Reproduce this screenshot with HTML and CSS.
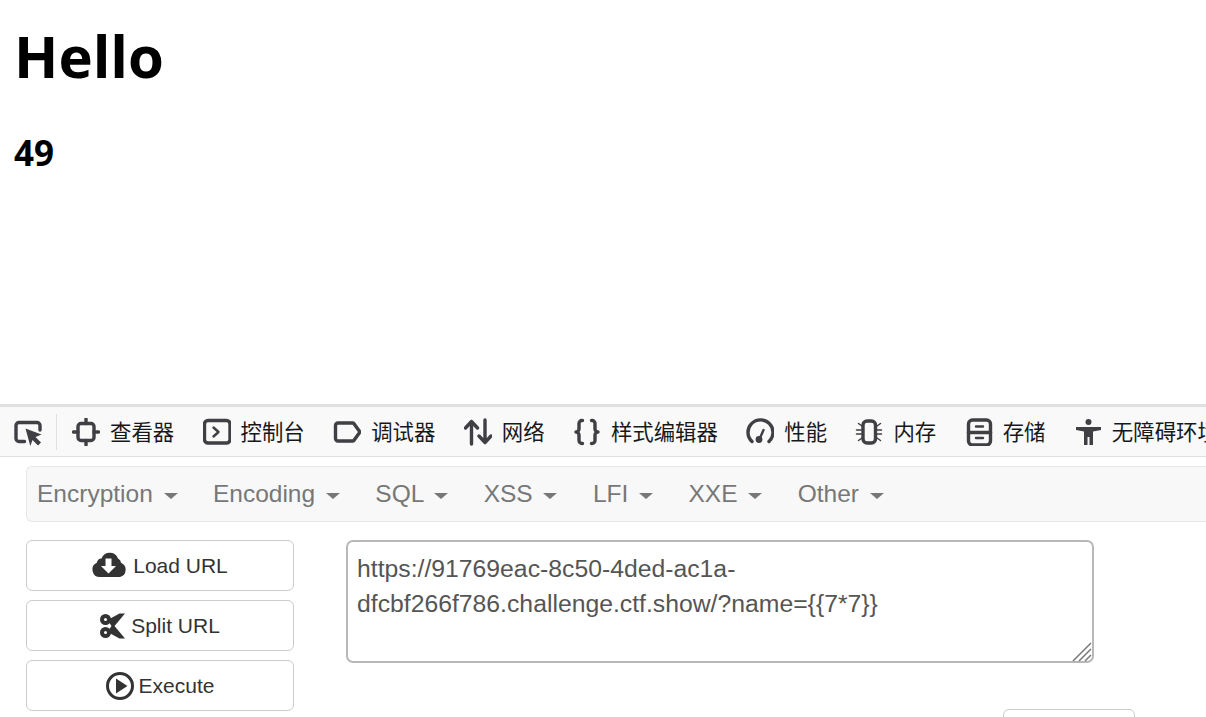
FILE: index.html
```html
<!DOCTYPE html>
<html lang="en">
<head>
    <meta charset="UTF-8">
    <meta name="viewport" content="width=device-width, initial-scale=1.0">
    <title>Hello</title>
    <link rel="stylesheet" href="styles.css">
</head>
<body>
    <div class="page">
        <h1>Hello</h1>
        <h3>49</h3>
    </div>

    <div class="toolbox">
        <button class="picker" aria-label="pick">
            <svg viewBox="0 0 28 28" width="28" height="28"><path class="line" d="M10.500 23.500H5a3 3 0 0 1-3-3V7.500a3 3 0 0 1 3-3h18a3 3 0 0 1 3 3V12"/><path class="fill" d="M11.500 10.500l16 6-6 2.500 5.500 5.500-3 3-5.500-5.500-2.200 6z"/></svg>
        </button>
        <span class="sep"></span>
        <div class="tab">
            <svg viewBox="0 0 28 28" width="28" height="28"><rect class="line" x="6" y="5.500" width="16" height="17" rx="3"/><path class="line" d="M14 1v4.500M14 22.500V27M1.500 14H6M22 14h4.500"/></svg>
            <span>查看器</span>
        </div>
        <div class="tab">
            <svg viewBox="0 0 28 28" width="28" height="28"><rect class="line" x="1.500" y="2.500" width="25.500" height="22.500" rx="3.500"/><path class="line thin" d="M10.500 9.500l5 4.500-5 4.500"/></svg>
            <span>控制台</span>
        </div>
        <div class="tab">
            <svg viewBox="0 0 28 28" width="28" height="28"><path class="line" d="M5 5h14.500a2 2 0 0 1 1.500.7l6 8.300-6 8.300a2 2 0 0 1-1.500.7H5a2.500 2.500 0 0 1-2.500-2.500v-13A2.500 2.500 0 0 1 5 5z"/></svg>
            <span>调试器</span>
        </div>
        <div class="tab">
            <svg viewBox="0 0 28 28" width="28" height="28"><path class="line" d="M7.500 26V3.500M1.500 10l6-6.500 6 6.500M21 2v22.500M15 18l6 6.500 6-6.500"/></svg>
            <span>网络</span>
        </div>
        <div class="tab">
            <svg viewBox="0 0 28 28" width="28" height="28"><path class="line" d="M9.500 2.500H9A3 3 0 0 0 6 5.500v5.500A3 3 0 0 1 3 14a3 3 0 0 1 3 3v5.500a3 3 0 0 0 3 3h.5M18.500 2.500h.5a3 3 0 0 1 3 3v5.500a3 3 0 0 0 3 3 3 3 0 0 0-3 3v5.500a3 3 0 0 1-3 3h-.5"/></svg>
            <span>样式编辑器</span>
        </div>
        <div class="tab">
            <svg viewBox="0 0 28 28" width="28" height="28"><path class="line" d="M6 23.500A12.500 12.500 0 1 1 23 23.500"/><circle class="fill" cx="13" cy="21.500" r="3.400"/><path class="line thin" d="M14 20l3.500-8"/></svg>
            <span>性能</span>
        </div>
        <div class="tab">
            <svg viewBox="0 0 28 28" width="28" height="28"><rect class="line" x="8" y="3" width="12.500" height="22" rx="4"/><path class="line hair" d="M7 8L3.500 5.500M7 12H1.500M7 16H1.500M7 20l-3.500 2.500M22 8l3.500-2.500M22 12h4.500M22 16h4.500M22 20l3.500 2.500"/></svg>
            <span>内存</span>
        </div>
        <div class="tab">
            <svg viewBox="0 0 28 28" width="28" height="28"><rect class="line" x="3.500" y="2" width="22" height="25" rx="4"/><path class="line" d="M3.500 14.500h22"/><path class="line thin" d="M11 8.500h7M11 20h7"/></svg>
            <span>存储</span>
        </div>
        <div class="tab">
            <svg viewBox="0 0 28 28" width="28" height="28"><circle class="fill" cx="14.500" cy="4" r="3"/><path class="fill" d="M2 9h25v3l-8 1.500V27h-3.500v-8h-2v8H10V13.500L2 12z"/></svg>
            <span>无障碍环境</span>
        </div>
    </div>

    <div class="hackbar">
        <nav class="navbar">
            <a class="nav-item">Encryption <i class="caret"></i></a>
            <a class="nav-item">Encoding <i class="caret"></i></a>
            <a class="nav-item">SQL <i class="caret"></i></a>
            <a class="nav-item">XSS <i class="caret"></i></a>
            <a class="nav-item">LFI <i class="caret"></i></a>
            <a class="nav-item">XXE <i class="caret"></i></a>
            <a class="nav-item">Other <i class="caret"></i></a>
        </nav>
        <div class="workspace">
            <div class="actions">
                <button class="btn">
                    <svg class="icon-up" viewBox="0 0 36 26" width="36" height="26"><path class="solid" d="M8 25A7.500 7.500 0 0 1 4.800 10.700 4.500 4.500 0 0 1 9.500 6.500 8.800 8.800 0 0 1 26 6.500 5 5 0 0 1 29 10.800 7.500 7.500 0 0 1 28 25z"/><path class="punch" d="M13.500 6.500h6v7.500h4.500l-7.500 7.500L9 14h4.500z"/></svg>
                    Load URL
                </button>
                <button class="btn">
                    <svg viewBox="0 0 26 26" width="26" height="26"><circle class="ring bold" cx="5.500" cy="6.500" r="3.500"/><circle class="ring bold" cx="5.500" cy="19.500" r="3.500"/><path class="solid" d="M7.500 7L19.500.5h5.500L14.500 13 25 25.500h-5.500L7.500 19l4-6z"/></svg>
                    Split URL
                </button>
                <button class="btn">
                    <svg viewBox="0 0 28 28" width="28" height="28"><circle class="ring" cx="14" cy="14" r="12.500"/><path class="solid" d="M10 6.500L21.500 14 10 21.500z"/></svg>
                    Execute
                </button>
            </div>
            <div class="request">
                <textarea class="url" spellcheck="false">https://91769eac-8c50-4ded-ac1a-
dfcbf266f786.challenge.ctf.show/?name={{7*7}}</textarea>
                <svg class="grip" viewBox="0 0 20 20" width="20" height="20"><path d="M1 19L19 1M7 19L19 7M13 19l6-6" /></svg>
                <div class="options">
                    <button class="btn small"></button>
                </div>
            </div>
        </div>
    </div>
</body>
</html>
```

FILE: styles.css
```css
* { margin: 0; padding: 0; box-sizing: border-box; }
html, body { height: 717px; overflow: hidden; background: #fff; }
body { font-family: "Liberation Sans", Arial, sans-serif; }

.page {
    height: 404px;
    padding: 0 15px;
    font-family: "Open Sans", "Noto Sans", sans-serif;
    color: #000;
}
.page h1 { font-size: 58px; line-height: 82px; padding-top: 15px; margin-left: -1px; font-weight: 700; }
.page h3 { font-size: 35px; line-height: 48px; margin: 32px 0 0 -1px; font-weight: 700; }

.toolbox {
    display: flex;
    align-items: center;
    height: 53px;
    border-top: 3px solid #e0e0e2;
    border-bottom: 1px solid #e0e0e2;
    background: #f9f9fa;
    font-family: "Noto Sans CJK SC", sans-serif;
    font-size: 21.4px;
    color: #18181a;
    white-space: nowrap;
    overflow: hidden;
    padding-left: 14px;
}
.picker { background: none; border: none; width: 28px; height: 28px; }
.sep { width: 1px; height: 36px; background: #e0e0e2; margin: 0 15px 0 14px; flex: none; }
.tab { display: flex; align-items: center; gap: 10px; margin-right: 28.400px; flex: none; }
.tab span { padding-bottom: 2px; }
.tab svg, .picker svg { display: block; flex: none; }
.line { fill: none; stroke: #3f3f44; stroke-width: 3.400; stroke-linecap: round; stroke-linejoin: round; }
.thin { stroke-width: 2.400; }
.hair { stroke-width: 1.500; }
.fill { fill: #3f3f44; }

.hackbar { height: 260px; overflow: hidden; padding: 9px 0 0 26px; }
.navbar {
    display: flex;
    align-items: center;
    gap: 35.400px;
    height: 56px;
    padding-left: 10px;
    background: #f8f8f8;
    border: 1px solid #e7e7e7;
    border-right: 0;
    border-radius: 6px 0 0 6px;
    font-size: 24.500px;
    color: #777;
}
.nav-item { white-space: nowrap; }
.caret {
    display: inline-block;
    margin-left: 4px;
    vertical-align: middle;
    border-top: 6px solid #777;
    border-left: 7px solid transparent;
    border-right: 7px solid transparent;
}

.workspace { display: flex; gap: 52px; margin-top: 18px; }
.actions { display: flex; flex-direction: column; gap: 9px; width: 268px; flex: none; }
.btn {
    display: flex;
    align-items: center;
    justify-content: center;
    gap: 5px;
    height: 51px;
    background: #fff;
    border: 1px solid #ccc;
    border-radius: 6px;
    font-family: inherit;
    font-size: 21px;
    color: #333;
}
.btn.small { width: 132px; height: 51px; }
.icon-up { margin-bottom: 2px; }
.solid { fill: #333; }
.punch { fill: #fff; }
.ring { fill: none; stroke: #333; stroke-width: 3; }
.ring.bold { stroke-width: 4; }

.request { position: relative; width: 748px; flex: none; }
.url {
    display: block;
    width: 748px;
    height: 123px;
    padding: 9px 9px;
    border: 2px solid #b8b8b8;
    border-radius: 7px;
    font-family: inherit;
    font-size: 24.760px;
    line-height: 35px;
    color: #555;
    outline: none;
    resize: none;
}
.grip {
    position: absolute;
    top: 102px;
    right: 2px;
    fill: none;
    stroke: #777;
    stroke-width: 1.500;
}
.options { display: flex; justify-content: flex-end; margin: 46px -41px 0 0; }
```
